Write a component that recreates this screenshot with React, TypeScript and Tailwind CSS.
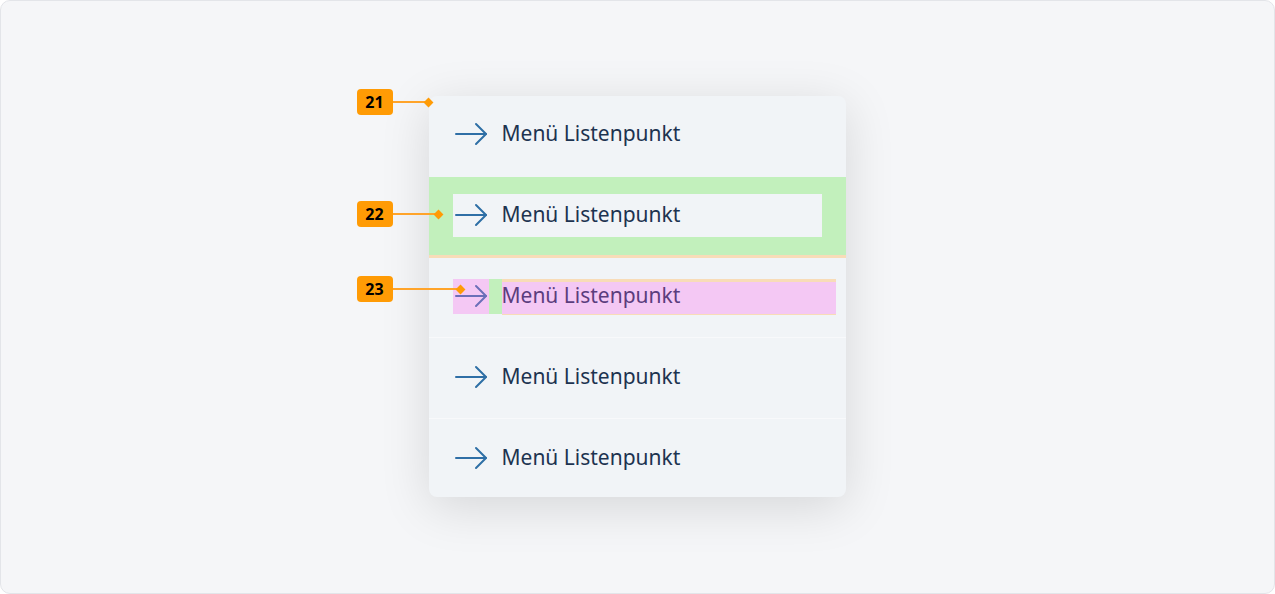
import React from "react";

const font = { fontFamily: '"Noto Sans", "Open Sans", sans-serif' };

function Arrow({ color = "#2f6fa6" }: { color?: string }) {
  return (
    <svg width="33" height="24" viewBox="0 0 33 24" fill="none" className="shrink-0">
      <path d="M1 12H31" stroke={color} strokeWidth="2" strokeLinecap="round" />
      <path d="M21 2L31 12L21 22" stroke={color} strokeWidth="2" strokeLinecap="round" strokeLinejoin="round" />
    </svg>
  );
}

function Badge({ label, top, lineWidth }: { label: string; top: number; lineWidth: number }) {
  return (
    <div className="absolute flex items-center" style={{ top, left: -72 }}>
      <div className="flex h-[26px] w-[36px] items-center justify-center rounded-[4px] bg-[#ff9b05] text-[16px] font-bold text-black">
        {label}
      </div>
      <div className="h-[2px] bg-[#ffa42a]" style={{ width: lineWidth }} />
      <div className="-ml-[4px] h-[7px] w-[7px] rotate-45 bg-[#ff9b05]" />
    </div>
  );
}

export default function App() {
  return (
    <div className="h-[594px] w-[1275px] bg-white" style={font}>
      <div className="flex h-full w-full justify-center rounded-[10px] border border-[#e3e5e9] bg-[#f5f6f8] pt-[95px]">
        <div className="relative ml-[-1px] h-[401px] w-[417px] rounded-[8px] bg-[#f1f4f7] shadow-[0_10px_50px_rgba(0,0,0,0.13)]">
          <div className="flex flex-col overflow-hidden rounded-[8px]">
            {/* item 1 */}
            <div className="flex h-[81px] items-center gap-[14px] pb-[5px] pl-[26px] pr-[24px] text-[21px] text-[#1d3350]">
              <Arrow />
              <span>Menü Listenpunkt</span>
            </div>

            {/* item 2 - padding highlight */}
            <div className="border-b-[3px] border-[#f8dcb8] bg-[#c2f0bc] pb-[18px] pl-[24px] pr-[24px] pt-[17px]">
              <div className="flex h-[43px] items-center gap-[14px] bg-[#f1f4f7] pb-[2px] pl-[2px] text-[21px] text-[#1d3350]">
                <Arrow />
                <span>Menü Listenpunkt</span>
              </div>
            </div>

            {/* item 3 - content highlight */}
            <div className="flex h-[80px] items-start border-b border-[#f8f9fb] pl-[24px] pr-[10px] pt-[21px]">
              <div className="flex h-[35px] w-[36px] items-center bg-[#f4c8f4] pb-[1px] pl-[2px]">
                <Arrow color="#6b6fb8" />
              </div>
              <div className="h-[35px] w-[13px] bg-[#c2f0bc]" />
              <div className="flex h-[36px] flex-1 items-center border-b border-t-[3px] border-[#f8dcb8] bg-[#f4c8f4] text-[21px] text-[#5b3d7d]">
                <span className="-mt-[4px]">Menü Listenpunkt</span>
              </div>
            </div>

            {/* item 4 */}
            <div className="flex h-[81px] items-center gap-[14px] border-b border-[#f8f9fb] pb-[3px] pl-[26px] pr-[24px] text-[21px] text-[#1d3350]">
              <Arrow />
              <span>Menü Listenpunkt</span>
            </div>

            {/* item 5 */}
            <div className="flex h-[77px] items-center gap-[14px] pl-[26px] pr-[24px] text-[21px] text-[#1d3350]">
              <Arrow />
              <span>Menü Listenpunkt</span>
            </div>
          </div>

          <Badge label="21" top={-7} lineWidth={36} />
          <Badge label="22" top={105} lineWidth={46} />
          <Badge label="23" top={180} lineWidth={68} />
        </div>
      </div>
    </div>
  );
}
